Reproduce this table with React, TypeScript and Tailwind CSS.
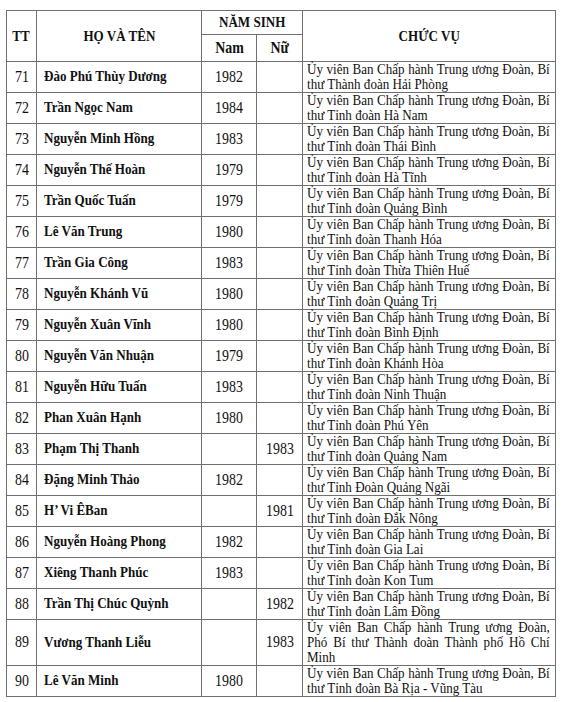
// Danh sách Ủy viên BCH Trung ương Đoàn (71–90), dạng bảng văn bản.
// Bản gốc là ảnh chụp bị nén ngang, nên chữ được co theo chiều ngang (scale-x).

import type { ReactNode } from 'react'

type Row = { tt: number; name: string; nam?: string; nu?: string; role: string }

const UV = 'Ủy viên Ban Chấp hành Trung ương Đoàn, Bí thư '

const rows: Row[] = [
  { tt: 71, name: 'Đào Phú Thùy Dương', nam: '1982', role: UV + 'Thành đoàn Hải Phòng' },
  { tt: 72, name: 'Trần Ngọc Nam', nam: '1984', role: UV + 'Tỉnh đoàn Hà Nam' },
  { tt: 73, name: 'Nguyễn Minh Hồng', nam: '1983', role: UV + 'Tỉnh đoàn Thái Bình' },
  { tt: 74, name: 'Nguyễn Thế Hoàn', nam: '1979', role: UV + 'Tỉnh đoàn Hà Tĩnh' },
  { tt: 75, name: 'Trần Quốc Tuấn', nam: '1979', role: UV + 'Tỉnh đoàn Quảng Bình' },
  { tt: 76, name: 'Lê Văn Trung', nam: '1980', role: UV + 'Tỉnh đoàn Thanh Hóa' },
  { tt: 77, name: 'Trần Gia Công', nam: '1983', role: UV + 'Tỉnh đoàn Thừa Thiên Huế' },
  { tt: 78, name: 'Nguyễn Khánh Vũ', nam: '1980', role: UV + 'Tỉnh đoàn Quảng Trị' },
  { tt: 79, name: 'Nguyễn Xuân Vĩnh', nam: '1980', role: UV + 'Tỉnh đoàn Bình Định' },
  { tt: 80, name: 'Nguyễn Văn Nhuận', nam: '1979', role: UV + 'Tỉnh đoàn Khánh Hòa' },
  { tt: 81, name: 'Nguyễn Hữu Tuấn', nam: '1983', role: UV + 'Tỉnh đoàn Ninh Thuận' },
  { tt: 82, name: 'Phan Xuân Hạnh', nam: '1980', role: UV + 'Tỉnh đoàn Phú Yên' },
  { tt: 83, name: 'Phạm Thị Thanh', nu: '1983', role: UV + 'Tỉnh đoàn Quảng Nam' },
  { tt: 84, name: 'Đặng Minh Thảo', nam: '1982', role: UV + 'Tỉnh Đoàn Quảng Ngãi' },
  { tt: 85, name: 'H’ Vi ÊBan', nu: '1981', role: UV + 'Tỉnh đoàn Đắk Nông' },
  { tt: 86, name: 'Nguyễn Hoàng Phong', nam: '1982', role: UV + 'Tỉnh đoàn Gia Lai' },
  { tt: 87, name: 'Xiêng Thanh Phúc', nam: '1983', role: UV + 'Tỉnh đoàn Kon Tum' },
  { tt: 88, name: 'Trần Thị Chúc Quỳnh', nu: '1982', role: UV + 'Tỉnh đoàn Lâm Đồng' },
  { tt: 89, name: 'Vương Thanh Liễu', nu: '1983', role: 'Ủy viên Ban Chấp hành Trung ương Đoàn, Phó Bí thư Thành đoàn Thành phố Hồ Chí Minh' },
  { tt: 90, name: 'Lê Văn Minh', nam: '1980', role: UV + 'Tỉnh đoàn Bà Rịa - Vũng Tàu' },
]

const cell = 'border border-[#707070] align-middle'

// co chữ theo chiều ngang
function Sq({ children, left }: { children?: ReactNode; left?: boolean }) {
  return (
    <span className={`inline-block whitespace-nowrap scale-x-[0.87] ${left ? 'origin-left' : 'origin-center'}`}>
      {children}
    </span>
  )
}

export default function App() {
  return (
    <div className="min-h-[702px] bg-white pl-[6px] pt-[10px] text-[#111] font-['Liberation_Serif','Times_New_Roman',serif]">
      <table className="w-[549px] table-fixed border-collapse">
        <colgroup>
          <col className="w-[30px]" />
          <col className="w-[165px]" />
          <col className="w-[55px]" />
          <col className="w-[46px]" />
          <col className="w-[253px]" />
        </colgroup>
        <thead>
          <tr className="h-[23px]">
            <th rowSpan={2} className={`${cell} text-center text-[15px] font-bold`}><Sq>TT</Sq></th>
            <th rowSpan={2} className={`${cell} text-center text-[15px] font-bold`}><Sq>HỌ VÀ TÊN</Sq></th>
            <th colSpan={2} className={`${cell} text-center text-[15px] font-bold`}><Sq>NĂM SINH</Sq></th>
            <th rowSpan={2} className={`${cell} text-center text-[15px] font-bold`}><Sq>CHỨC VỤ</Sq></th>
          </tr>
          <tr className="h-[27px]">
            <th className={`${cell} text-center text-[16px] font-bold`}><Sq>Nam</Sq></th>
            <th className={`${cell} text-center text-[16px] font-bold`}><Sq>Nữ</Sq></th>
          </tr>
        </thead>
        <tbody>
          {rows.map((r) => (
            <tr key={r.tt}>
              <td className={`${cell} text-center text-[16px]`}><Sq>{r.tt}</Sq></td>
              <td className={`${cell} pl-[7px] text-[15px] font-bold`}><Sq left>{r.name}</Sq></td>
              <td className={`${cell} text-center text-[16px]`}>{r.nam && <Sq>{r.nam}</Sq>}</td>
              <td className={`${cell} text-center text-[16px]`}>{r.nu && <Sq>{r.nu}</Sq>}</td>
              <td className={`${cell} pl-[4px] py-0`}>
                <div className="w-[279px] origin-left scale-x-[0.87] text-justify text-[15px] leading-[15px]">{r.role}</div>
              </td>
            </tr>
          ))}
        </tbody>
      </table>
    </div>
  )
}
